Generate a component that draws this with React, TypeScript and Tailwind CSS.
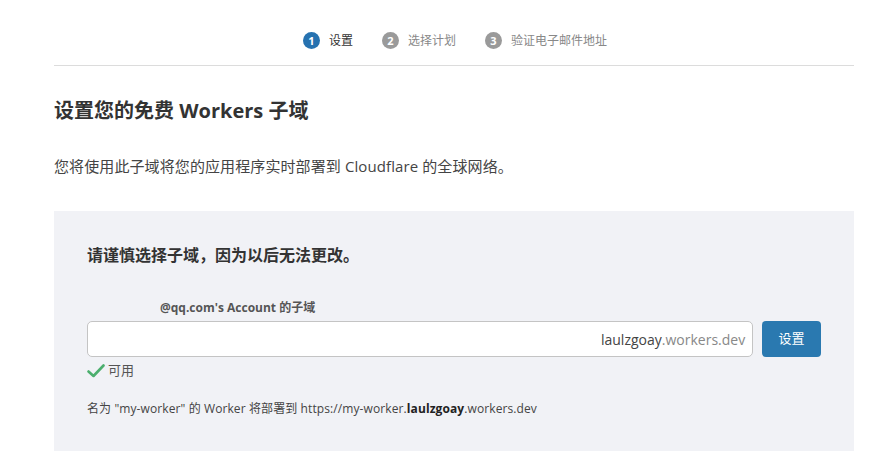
export default function App() {
  const steps = [
    { n: 1, label: '设置', active: true },
    { n: 2, label: '选择计划', active: false },
    { n: 3, label: '验证电子邮件地址', active: false },
  ];

  return (
    <main
      className="min-h-screen bg-white text-[#333]"
      style={{ fontFamily: '"Open Sans", "Noto Sans CJK SC", sans-serif' }}
    >
      <div className="w-[800px] ml-[54px]">
        {/* steps */}
        <div className="h-[66px] flex items-center justify-center gap-[29px] border-b border-[#dcdcdc] pt-[16px] pl-[2px]">
          {steps.map((s) => (
            <div key={s.n} className="flex items-center gap-[9px]">
              <span
                className={
                  s.active
                    ? 'w-[17px] h-[17px] rounded-full bg-[#2672b0] text-white text-[11px] font-bold flex items-center justify-center leading-none'
                    : 'w-[17px] h-[17px] rounded-full bg-[#9a9a9a] text-white text-[11px] font-bold flex items-center justify-center leading-none'
                }
              >
                {s.n}
              </span>
              <span className={s.active ? 'text-[12px] text-[#333]' : 'text-[12px] text-[#888]'}>{s.label}</span>
            </div>
          ))}
        </div>

        <h1 className="mt-[31px] text-[20px] font-bold text-[#333] leading-[28px]">设置您的免费 Workers 子域</h1>
        <p className="mt-[30px] text-[15px] text-[#444] leading-[22px] tracking-[0.1px]">
          您将使用此子域将您的应用程序实时部署到 Cloudflare 的全球网络。
        </p>

        {/* panel */}
        <div className="mt-[34px] bg-[#f1f2f6] h-[240px] px-[33px] pt-[32px]">
          <h2 className="text-[16px] font-bold text-[#333] leading-[24px]">请谨慎选择子域，因为以后无法更改。</h2>
          <div className="mt-[33px] pl-[73px] text-[12px] font-bold text-[#555] leading-[16px]">@qq.com's Account 的子域</div>
          <div className="mt-[5px] flex items-center gap-[9px]">
            <div className="w-[668px] h-[36px] bg-white border border-[#c4c4c4] rounded-[5px] flex items-center justify-end pr-[7px] text-[14px]">
              <span className="text-[#444]">laulzgoay</span>
              <span className="text-[#888]">.workers.dev</span>
            </div>
            <button className="w-[59px] h-[36px] bg-[#2a79b0] text-white text-[13px] rounded-[4px]">设置</button>
          </div>
          <div className="mt-[4px] flex items-center gap-[3px] text-[13px] text-[#555]">
            <svg width="18" height="14" viewBox="0 0 18 14">
              <path d="M1.5 7.5 L6.5 12 L16.5 1.5" fill="none" stroke="#4caf6e" strokeWidth="2.6" strokeLinecap="round" strokeLinejoin="round" />
            </svg>
            <span>可用</span>
          </div>
          <div className="mt-[20px] text-[12px] text-[#444] leading-[16px] tracking-[0.1px]">
            名为 "my-worker" 的 Worker 将部署到 https://my-worker.<span className="font-bold text-[#222]">laulzgoay</span>.workers.dev
          </div>
        </div>
      </div>
    </main>
  );
}
